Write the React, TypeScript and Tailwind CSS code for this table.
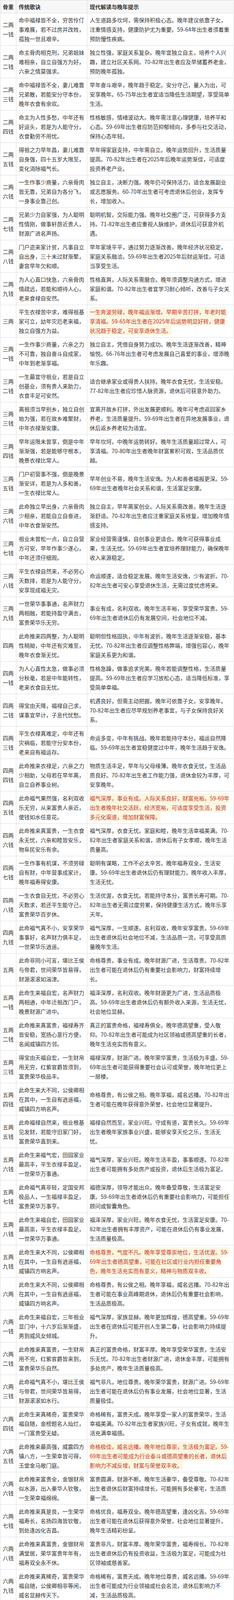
import { Fragment } from "react";

type Row = {
  weight: string;
  verse: string;
  note: string; // "|" marks a line break
  hot?: boolean;
};

const rows: Row[] = [
  { weight: "二两一钱", verse: "命中福禄皆不全，穷苦伶仃事难展，若不过房并改姓，孤独一世且艰辛。", note: "人生道路多坎坷，需保持积极心态。晚年建议依靠子女，|注重情感支持，健康防护尤为重要。59-64年出生者须着重|预防慢性疾病。" },
  { weight: "二两二钱", verse: "命主骨肉相克刑，兄弟姐妹难相亲，自立自强方为好，六亲之情莫强求。", note: "独立性强，家庭关系复杂。晚年宜独立自主，培养个人兴|趣，建立社区关系网。70-82年出生者应及早储蓄养老金，|预防晚年孤独。" },
  { weight: "二两三钱", verse: "命中福禄皆不全，妻儿难靠兄弟散，若能安分守本份，晚年衣食有余欢。", note: "早年奋斗艰辛，晚年趋于稳定。安分守己，量入为出，可|安享晚年。65-75年出生者宜适当降低生活期望，享受简单|生活。" },
  { weight: "二两四钱", verse: "命主为人性多愁，中年还有好运头，若是为人能守分，衣食勤劳不用忧。", note: "性格敏感，情绪波动大。晚年需注意心理健康，培养平和|心态。59-69年出生者应防范抑郁倾向，多参与社交活动，|保持心态年轻。" },
  { weight: "二两五钱", verse: "得祖之力早年昌，妻儿难靠自身强，四十五岁大限至，变化消除福气长。", note: "早年得家庭支持，中年需自立。晚年运势回升，生活质量|提高。70-82年出生者在2025年后晚年运势渐佳，可适度|投资养老产业。" },
  { weight: "二两六钱", verse: "一生作事少商量，六亲骨肉皆无靠，兄弟自为各分飞，一身事业靠己创。", note: "独立自主，决断力强。晚年仍可保持活力，适合发展副业|或志愿服务。60-70年出生者可考虑退休后创业，发挥专|长，增加收入。" },
  { weight: "二两七钱", verse: "兄弟少力自家强，为人聪明性情刚，做事轩昂近贵人，财源广进名声扬。", note: "聪明机智，交际能力强。晚年社交圈广泛，可获得多方支|持。71-82年出生者应重视人脉维护，退休后可获意外机|遇。" },
  { weight: "二两八钱", verse: "门户迩来家计贫，凡事自立自出身，三十未过财渐聚，妻宫早年欠和顺。", note: "早年家境平平，通过努力逐渐改善。晚年经济状况稳定，|家庭关系融洽。59-69年出生者2025年后财运渐佳，可适|当享受生活。" },
  { weight: "二两九钱", verse: "为人心直口快急，六亲骨肉情疏远，若能和顺待人心，老来食禄自安然。", note: "性格直爽，人际关系需磨合。晚年须调整沟通方式，增进|家庭和谐。70-82年出生者宜学习耐心倾听，改善与子女关|系。" },
  { weight: "三两", verse: "平生衣禄苦中求，难得祖基家可立，幼年灾厄老来福，独立自强方为益。", note: "一生奔波劳碌，晚年福运渐增。早期辛苦打拼，年老时能|享清福。59-65年出生者在2025年后运势明显好转，健康|状况趋于稳定，可安享退休生活。", hot: true },
  { weight: "三两一钱", verse: "一生作事少商量，六亲之力不可靠，独自奋斗自成家，中年到老渐享福。", note: "独立自主，凭借自身努力成功。晚年生活逐渐改善，精神|愉悦。66-76年出生者可考虑发展自己喜爱的事业，增添晚|年乐趣。" },
  { weight: "三两二钱", verse: "一生最宜守祖业，若是自立创基业，须有贵人来助力，衣食丰足可安然。", note: "适合继承家业或得贵人扶持。晚年衣食无忧，生活安稳。|77-82年出生者应珍惜人脉资源，退休后可获意外助力。" },
  { weight: "三两三钱", verse: "离祖须当早别乡，独立自创始为强，若在故乡难聚财，中年衣禄渐安康。", note: "宜离开故乡打拼，外出发展更顺利。晚年可考虑返回家乡|养老，生活质量提升。59-69年出生者在异地发展事业，退|休后返乡养老较为适宜。" },
  { weight: "三两四钱", verse: "早年运限未曾享，倒是中年渐渐强，若是能够守根本，晚景衣禄比常人。", note: "早年坎坷，中晚年运势转好。晚年生活质量超过常人，可|享清福。70-80年出生者晚年财富累积可观，生活品质优|越。" },
  { weight: "三两五钱", verse: "门户初营事不强，倒是晚景渐安详，若是为人多和善，一生衣禄比常人。", note: "早年创业不易，晚年生活安逸。为人和善者福报更深。59-|69年出生者晚年社会关系和谐，生活富足安康。" },
  { weight: "三两六钱", verse: "此命独立早出身，六亲骨肉少相亲，若能自立自奋进，中年衣食渐安然。", note: "独立自主，早年离家创业。人际关系需改善，晚年生活逐|渐舒适。70-82年出生者应注重家庭关系修复，增加晚年情|感支持。" },
  { weight: "三两七钱", verse: "祖业未曾松一点，自立自营方可安，早年作事少遂心，中年还须仔细观。", note: "家业经营需谨慎，自创事业更适合。晚年可获得事业成|果，生活无忧。59-69年出生者宜培养理财能力，确保晚年|收入来源稳定。" },
  { weight: "三两八钱", verse: "平生衣禄自然来，不必劳心天数排，若是为人能守分，安享现成福无灾。", note: "命运顺遂，适合稳定发展。晚年生活安逸，少有波折。70-|82年出生者可安心享受退休生活，无需过度忧虑将来。" },
  { weight: "三两九钱", verse: "一世荣华事事通，名声财力两相融，若能持盈守满去，富贵荣华乐无穷。", note: "事业有成，名利双收。晚年生活丰裕，享受荣华富贵。59-|69年出生者退休后仍有发展空间，社会地位不减。" },
  { weight: "四两", verse: "此命推来四两整，为人聪明性稍拗，中年还有灾难至，晚年衣食渐无忧。", note: "聪明但性格固执，中年有波折。晚年生活逐渐安稳，基本|无忧。70-82年出生者应调整性格弊端，增强包容心，晚年|家庭关系更为和谐。" },
  { weight: "四两一钱", verse: "为人心直性太急，做事必须分秋毫，若是中年能转性，老来衣食自无忧。", note: "性格急躁，做事追求完美。晚年若能调整性格，生活质量|提高。59-69年出生者应学习放松心态，适当降低标准，享|受简单幸福。" },
  { weight: "四两二钱", verse: "得宝由天降，福禄自己求，谋事宜早计，子息代忧愁。", note: "机遇良好，但需主动把握。晚年可依靠子女，安享晚年。|70-82年出生者应尽早规划养老事宜，与子女保持良好关|系。" },
  { weight: "四两三钱", verse: "平生衣禄真难定，中年还有灾祸临，若能守分安本份，老来自有福运存。", note: "命运多变，中年有挑战。晚年若能持守本分，福运自然降|临。59-69年出生者宜稳健度过中年，晚年生活趋于安逸。" },
  { weight: "四两四钱", verse: "此命推来衣禄足，六亲之力少相助，父母若在早年离，自立自养事业树。", note: "物质生活丰足，早年与父母缘薄。晚年衣食无忧，生活品|质良好。70-82年出生者工作能力强，退休金较为丰厚，可|安享晚年。" },
  { weight: "四两五钱", verse: "此命福气果然强，名利双收乐无穷，从来富贵人亲近，使钱如水任意花。", note: "福气深厚，事业有成。人际关系良好，财富充裕。59-69年|出生者晚年社交活跃，经济宽裕，可适度享受生活，投资|多元化渠道，增加财富保障。", hot: true },
  { weight: "四两六钱", verse: "此命推来真富贵，一生衣食永无忧，六亲和睦皆安乐，物阜民安乐有余。", note: "福气深厚，衣食无忧。家庭和睦，晚年生活幸福美满。70-|82年出生者家庭关系和谐，退休后有子女孝顺，晚年生活|质量高。" },
  { weight: "四两七钱", verse: "一生作事有机谋，不须劳碌自有财，中年营事成家计，晚年福寿得安康。", note: "聪明有谋略，工作不必太辛苦。晚年福寿双全，生活安|康。59-69年出生者退休后仍有理财能力，晚年收入丰厚，|生活无忧。" },
  { weight: "四两八钱", verse: "一生衣食自无忧，不必劳心天数求，若还平生能守己，富贵荣华百岁休。", note: "生活优渥，衣食无忧。若能持守本分，富贵长寿可期。70-|82年出生者无需过度劳累，保持健康生活方式，晚年乐享|天年。" },
  { weight: "四两九钱", verse: "此命福气真不小，安享荣华事事好，名声财力俱丰足，一世荣华乐逍遥。", note: "福气深厚，一生顺遂。名利双收，晚年安享富贵。59-69年|出生者退休后社会地位不减，生活品质一流，可享受高质|量晚年生活。" },
  { weight: "五两", verse: "此命非同小可言，堪比王侯与帝君，世间荣华皆易得，财源滚滚如湍津。", note: "命格尊贵，事业有成。晚年财源广进，生活尊贵。70-82年|出生者可能在退休后仍有重要社会影响力，财富持续增|长。" },
  { weight: "五两一钱", verse: "此命生来福自宏，名声财力两相通，中年迁祖改门户，晚景财源广进中。", note: "福泽深厚，名利双收。晚年财源更为广进，生活品质极|高。59-69年出生者退休后仍有额外收入来源，生活无忧，|社会地位显赫。" },
  { weight: "五两二钱", verse: "此命推来真富贵，福禄寿齐皆安稳，宽扬心意行方便，名闻威镇四方邻。", note: "真正的富贵命格，福禄寿俱全。晚年德高望重，受人敬|仰。70-82年出生者可能成为社区领袖或德高望重的长者，|晚年生活充实而有意义。" },
  { weight: "五两三钱", verse: "得宝由天福自宏，一生财帛用无穷，红紫官爵皆须到，富贵荣华极品丰。", note: "福禄深厚，财源广进。晚年荣华富贵，生活极为丰盛。59-|69年出生者可能获得重要社会认可或荣誉，晚年地位更上|一层楼。" },
  { weight: "五两四钱", verse: "此命生来大不同，公侯卿相在其中，一生自有逍遥福，威镇四方响名声。", note: "命格尊贵，有公侯之相。晚年享福，威名远播。70-82年出|生者可能在晚年获得意外荣誉，社会地位显著提升。" },
  { weight: "五两五钱", verse: "此命福禄自然来，祖业根基见发财，若能守旧家门好，富贵荣华直到来。", note: "福禄自然而至，家业兴旺。守成有道，富贵长久。59-69年|出生者晚年家族事业兴盛，能够安享天伦之乐，生活无|忧。" },
  { weight: "五两六钱", verse: "此命生来福气宏，田园家业最高丰，平生衣禄丰盈足，一世荣华万事通。", note: "福气深厚，家业兴旺。晚年生活丰盈，事事顺遂。70-82年|出生者可能拥有多处房产或投资，退休后生活极为富足。" },
  { weight: "五两七钱", verse: "此命福气真非轻，定国安邦极品人，一生福禄丰盈足，富贵荣华万事亨。", note: "福德深厚，领导才能出众。晚年备受尊敬，生活富足安|康。59-69年出生者退休后仍有重要社会影响力，可能担任|顾问或智囊角色。" },
  { weight: "五两八钱", verse: "此命生来福自宏，田园家业最高崇，平生衣禄丰盈足，一世荣华万事通。", note: "福泽深厚，家业兴旺。晚年衣食无忧，生活富足安康。70-|82年出生者拥有丰厚资产，可能在退休后仍有事业发展，|生活质量极高。" },
  { weight: "五两九钱", verse: "此命生来大不同，公侯卿相在其中，一生自有逍遥福，威镇四方响名声。", note: "命格尊贵，气度不凡。晚年享受尊崇地位，生活优渥。59-|69年出生者德高望重，可能在社区或行业内担任重要角|色，晚年生活充实而有意义，精神与物质双丰收。", hot: true },
  { weight: "六两", verse: "此命生来大不同，公侯卿相在其中，一生自有逍遥福，威镇四方响名声。", note: "命格尊贵，有公侯之相。晚年享福，威名远播。70-82年出|生者可能在事业高峰期退休，退休后仍有重要社会影响，|生活品质极高。" },
  { weight: "六两一钱", verse: "此命生来福自宏，三年祖业显门中，十六岁后渐渐盛，男到威风女倾城。", note: "福气深厚，家族显赫。晚年更加辉煌，德高望重。59-69年|出生者在退休后可能开创人生第二春，社会影响力持续提|升。" },
  { weight: "六两二钱", verse: "此命推来真富贵，一生财帛用不完，红紫官爵皆来到，富贵荣华乐自然。", note: "真正的富贵命格，财富丰厚。晚年享受荣华富贵，生活安|乐无忧。70-82年出生者财源广进，退休金丰厚，可能拥有|多处房产，晚年生活质量极高。" },
  { weight: "六两三钱", verse: "此命福气真不小，堪比王侯与帝君，世间荣华皆易得，财源滚滚如水行。", note: "福气非凡，地位尊贵。晚年荣华富贵，财源广进。59-69年|出生者可能在退休后仍有事业发展，社会地位显著，生活|质量极佳。" },
  { weight: "六两四钱", verse: "此命生来真稀奇，富贵荣华福自随，金榜题名人灿烂，一门富贵受无疑。", note: "命格稀有，富贵天成。晚年享受一家人的富贵荣华，生活|幸福美满。70-82年出生者家族兴旺，子女有成就，晚年生|活充满幸福感。" },
  { weight: "六两五钱", verse: "此命推来最高强，威震四方镇八方，一生荣幸皆可得，玉堂金马敞门庭。", note: "命格极佳，威名远播。晚年地位尊崇，生活极为富足。59-|69年出生者可能成为行业泰斗或德高望重的长者，退休后|影响力不减反增，财富与荣誉双丰收。", hot: true },
  { weight: "六两六钱", verse: "此命推来富贵全，金银财帛似水源，出入豪华人钦敬，一生荣幸福绵绵。", note: "富贵圆满，财源不断。晚年生活豪华，备受尊敬。70-82年|出生者退休后财富持续增长，可能拥有多处豪宅，生活质|量一流。" },
  { weight: "六两七钱", verse: "此命推来真是良，一生荣华福寿长，名扬四海皆钦敬，到处逢凶化吉昌。", note: "命格优良，福寿双全。晚年德高望重，逢凶化吉。59-69年|出生者可能在退休后获得意外荣誉，社会地位显著提升，|晚年生活精彩纷呈。" },
  { weight: "六两八钱", verse: "此命推来真富贵，金银财帛满堂居，荣华富贵年年有，福寿双全永不休。", note: "富贵非凡，财富丰厚。晚年荣华富贵，福寿绵长。70-82年|出生者退休后仍有投资收益，生活极为富足，可能成为社|区领袖或慈善家。" },
  { weight: "六两九钱", verse: "此命推来真稀奇，富贵荣华福自随，公侯卿相非等闲，威名显赫传天下。", note: "命格稀有，富贵天成。晚年地位尊贵，威名远播。59-69年|出生者可能成为行业领袖或社会名流，退休后影响力不|减，生活品质极高。" },
  { weight: "七两一钱", verse: "此命生来大不同，富贵荣华极品崇，一生自有逍遥福，四方名誉播威风。", note: "命格非凡，富贵极致。晚年生活悠闲，威名远播。70-82年|出生者可能在退休前已功成名就，退休后享受崇高社会地|位，生活无忧无虑。" },
  { weight: "七两二钱", verse: "此命生来福自宏，富贵荣华极品崇，君臣豪杰多钦敬，威名显赫震乾坤。", note: "福禄极深，富贵极致。晚年受万人景仰，威名显赫。59-69|年出生者在退休后可能获得重要社会荣誉或职位，成为行|业标杆，晚年生活品质与社会地位达到人生巅峰。", hot: true },
];

function Lines({ text }: { text: string }) {
  return (
    <>
      {text.split("|").map((line, i) => (
        <Fragment key={i}>
          {i > 0 && <br />}
          {line}
        </Fragment>
      ))}
    </>
  );
}

export default function App() {
  return (
    <div className="w-[600px] bg-white font-['Noto_Sans_CJK_SC',sans-serif] text-[14px] leading-[24px] text-[#333]">
      <table className="w-full table-fixed border-collapse border border-[#ddd]">
        <colgroup>
          <col className="w-[41px]" />
          <col className="w-[182px]" />
          <col />
        </colgroup>
        <thead>
          <tr className="bg-[#f7f7f7]">
            <th className="border border-[#ddd] px-[6px] py-[4px] text-left font-bold">骨重</th>
            <th className="border border-[#ddd] px-[6px] py-[4px] text-left font-bold">传统歌诀</th>
            <th className="border border-[#ddd] px-[6px] py-[4px] text-left font-bold">现代解读与晚年提示</th>
          </tr>
        </thead>
        <tbody>
          {rows.map((r) => (
            <tr key={r.weight}>
              <td className="border border-[#ddd] pl-[6px] pr-[5px] py-[5px] align-middle">
                {r.weight.length > 2 ? (
                  <>
                    {r.weight.slice(0, 2)}
                    <br />
                    {r.weight.slice(2)}
                  </>
                ) : (
                  r.weight
                )}
              </td>
              <td className="border border-[#ddd] pl-[6px] pr-[4px] py-[5px] align-middle">{r.verse}</td>
              <td className="border border-[#ddd] pl-[6px] pr-[3px] py-[5px] align-middle whitespace-nowrap">
                {r.hot ? (
                  <span className="bg-[#fdf6e1] py-[2px] text-[#c0392b]">
                    <Lines text={r.note} />
                  </span>
                ) : (
                  <Lines text={r.note} />
                )}
              </td>
            </tr>
          ))}
        </tbody>
      </table>
    </div>
  );
}
